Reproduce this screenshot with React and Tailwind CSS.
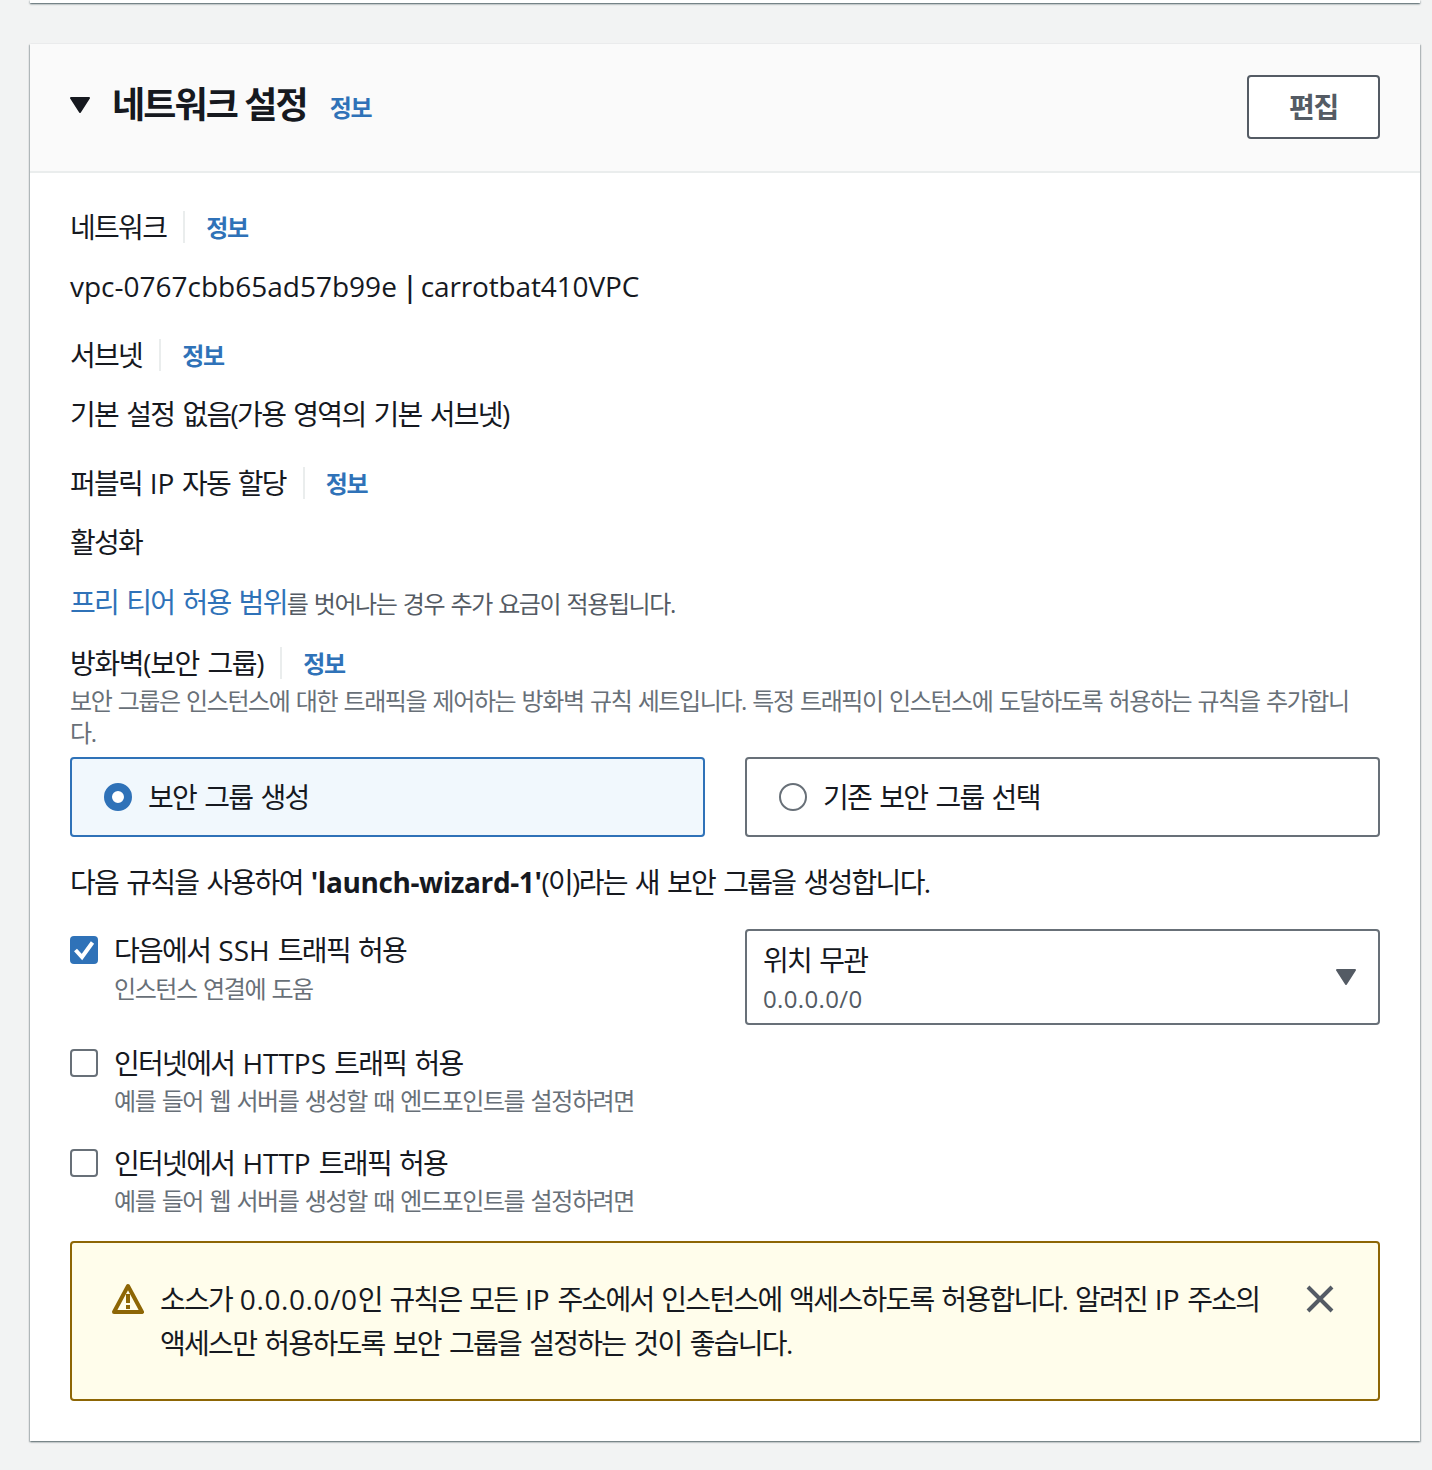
import React from "react";

const fontFamily = "font-['Open_Sans','Noto_Sans_CJK_KR',sans-serif]";

// hangul is tightened to the width of the original font, spaces opened up a bit
const body = "text-[28px] tracking-[-1.7px] [word-spacing:2.5px]";
const small = "text-[24px] leading-[32px] tracking-[-1.4px] [word-spacing:1.5px]";

function L({ children, className = "tracking-normal" }) {
    return <span className={`[word-spacing:0] ${className}`}>{children}</span>;
}

function InfoLink({ className = "" }) {
    return (
        <a className={`text-[24px] leading-[32px] font-bold tracking-[-1.3px] text-[#2f72b8] ${className}`}>
            정보
        </a>
    );
}

function FieldLabel({ children, className = "", textClassName = body }) {
    return (
        <div className={`flex items-center h-[40px] ${className}`}>
            <span className={`${textClassName} leading-[40px]`}>{children}</span>
            <span className="w-[2px] h-[32px] bg-[#eaeded] ml-[17px] mr-[21px]" />
            <InfoLink className="mt-[2px]" />
        </div>
    );
}

function FieldValue({ children, className = "" }) {
    return <div className={`${body} leading-[40px] ${className}`}>{children}</div>;
}

function Radio({ checked, label }) {
    return (
        <div
            className={`flex items-center h-[80px] pl-[32px] rounded-[4px] border-2 ${
                checked ? "bg-[#f1f8fd] border-[#2f72b8]" : "bg-white border-[#687078]"
            }`}
        >
            {checked ? (
                <span className="w-[28px] h-[28px] rounded-full border-[8px] border-[#2f72b8] bg-white" />
            ) : (
                <span className="w-[28px] h-[28px] rounded-full border-2 border-[#687078] bg-white" />
            )}
            <span className={`ml-[16px] ${body} leading-[40px]`}>{label}</span>
        </div>
    );
}

function Checkbox({ checked }) {
    if (checked) {
        return (
            <span className="block w-[28px] h-[28px] rounded-[4px] bg-[#2f72b8] shrink-0">
                <svg width="28" height="28" viewBox="0 0 28 28" fill="none">
                    <path d="M5.5 14 L12 21 L22.5 6.5" stroke="white" strokeWidth="4" />
                </svg>
            </span>
        );
    }
    return <span className="block w-[28px] h-[28px] rounded-[4px] border-2 border-[#687078] bg-white shrink-0" />;
}

function RuleRow({ checked, label, hint, className = "", hintClassName = "mt-[2px]" }) {
    return (
        <div className={`flex items-start gap-[16px] ${className}`}>
            <div className="pt-[6px]">
                <Checkbox checked={checked} />
            </div>
            <div>
                <div className={`${body} leading-[40px]`}>{label}</div>
                <div className={`${hintClassName} ${small} text-[#687078]`}>{hint}</div>
            </div>
        </div>
    );
}

export default function App() {
    return (
        <div className={`${fontFamily} bg-[#f2f3f3] h-[1470px] px-[30px] pr-[12px] text-[#16191f] overflow-hidden`}>
            <div className="h-[3px] bg-white shadow-[0_1px_2px_rgba(0,28,36,0.7)]" />

            <section className="mt-[41px] h-[1397px] bg-white shadow-[0_1px_2px_0_rgba(0,28,36,0.45),1px_1px_1px_0_rgba(0,28,36,0.15),-1px_1px_1px_0_rgba(0,28,36,0.15)]">
                <header className="flex items-center justify-between h-[129px] pl-[40px] pr-[40px] bg-[#fafafa] border-b-2 border-[#eaeded]">
                    <div className="flex items-center">
                        <svg width="20" height="16" viewBox="0 0 20 16" className="mt-[-6px]">
                            <path d="M1 1 H19 L10 15 Z" fill="#16191f" stroke="#16191f" strokeWidth="2" strokeLinejoin="round" />
                        </svg>
                        <h2 className="ml-[22px] text-[36px] leading-[48px] font-bold tracking-[-1.9px] mt-[-6px]">네트워크 설정</h2>
                        <InfoLink className="ml-[23px]" />
                    </div>
                    <button className="w-[133px] h-[64px] mt-[-2px] rounded-[4px] border-2 border-[#545b64] bg-white text-[28px] font-bold tracking-[-1.15px] text-[#545b64]">
                        편집
                    </button>
                </header>

                <div className="px-[40px] pt-[34px]">
                    <FieldLabel>네트워크</FieldLabel>
                    <FieldValue className="mt-[19px]">
                        <L>vpc-0767cbb65ad57b99e</L>
                        <span className="font-semibold tracking-[-2px] [word-spacing:0]"> | </span>
                        <L className="tracking-[-0.15px]">carrotbat410VPC</L>
                    </FieldValue>

                    <FieldLabel className="mt-[29px]">서브넷</FieldLabel>
                    <FieldValue className="mt-[19px]">기본 설정 없음(가용 영역의 기본 서브넷)</FieldValue>

                    <FieldLabel className="mt-[29px]" textClassName="text-[28px] tracking-[-1.7px] [word-spacing:2px]">
                        퍼블릭 <L>IP</L> 자동 할당
                    </FieldLabel>
                    <FieldValue className="mt-[19px]">활성화</FieldValue>

                    <div className={`mt-[20px] h-[40px] ${small} !leading-[40px] text-[#545b64]`}>
                        <a className={`${body} text-[#2f72b8]`}>프리 티어 허용 범위</a>를 벗어나는 경우 추가 요금이 적용됩니다.
                    </div>

                    <FieldLabel className="mt-[21px]" textClassName="text-[28px] tracking-[-1.35px] [word-spacing:2.5px]">
                        방화벽(보안 그룹)
                    </FieldLabel>
                    <p className={`mt-[2px] w-[1290px] ${small} text-[#687078]`}>
                        보안 그룹은 인스턴스에 대한 트래픽을 제어하는 방화벽 규칙 세트입니다. 특정 트래픽이 인스턴스에 도달하도록 허용하는 규칙을 추가합니다.
                    </p>

                    <div className="grid grid-cols-2 gap-[40px] mt-[8px]">
                        <Radio checked label="보안 그룹 생성" />
                        <Radio label="기존 보안 그룹 선택" />
                    </div>

                    <p className={`mt-[25px] ${body} leading-[40px]`}>
                        다음 규칙을 사용하여 <b className="tracking-[-0.4px]">'launch-wizard-1'</b>(이)라는 새 보안 그룹을 생성합니다.
                    </p>

                    <div className="grid grid-cols-2 gap-[40px] mt-[27px]">
                        <RuleRow
                            checked
                            label={<>다음에서 <L>SSH</L> 트래픽 허용</>}
                            hint="인스턴스 연결에 도움"
                            className="pt-[1px]"
                            hintClassName="mt-[3px]"
                        />
                        <div className="relative h-[96px] rounded-[4px] border-2 border-[#687078] pl-[16px] pt-[9px]">
                            <div className={`${body} leading-[40px]`}>위치 무관</div>
                            <div className="text-[24px] leading-[32px] tracking-[0.35px] text-[#545b64] mt-[3px]">0.0.0.0/0</div>
                            <svg width="20" height="16" viewBox="0 0 20 16" className="absolute right-[22px] top-[38px]">
                                <path d="M1 1 H19 L10 15 Z" fill="#545b64" stroke="#545b64" strokeWidth="2" strokeLinejoin="round" />
                            </svg>
                        </div>
                    </div>

                    <RuleRow
                        label={<>인터넷에서 <L>HTTPS</L> 트래픽 허용</>}
                        hint="예를 들어 웹 서버를 생성할 때 엔드포인트를 설정하려면"
                        className="mt-[18px]"
                    />
                    <RuleRow
                        label={<>인터넷에서 <L>HTTP</L> 트래픽 허용</>}
                        hint="예를 들어 웹 서버를 생성할 때 엔드포인트를 설정하려면"
                        className="mt-[26px]"
                    />

                    <div className="flex items-start h-[160px] mt-[24px] pl-[40px] pr-[44px] pt-[34px] rounded-[4px] border-2 border-[#8d6605] bg-[#fffdeb]">
                        <svg width="32" height="32" viewBox="0 0 32 32" fill="none" className="mt-[6px] shrink-0">
                            <path d="M16 3 L30 29 H2 Z" stroke="#8d6605" strokeWidth="4" strokeLinejoin="round" />
                            <path d="M16 11 V20 M16 22 V26" stroke="#8d6605" strokeWidth="4" />
                        </svg>
                        <div className={`ml-[16px] w-[1110px] ${body} leading-[44px]`}>
                            <div className="[word-spacing:2.1px]">
                                소스가 <L className="tracking-[0.6px]">0.0.0.0/0</L>인 규칙은 모든 <L>IP</L> 주소에서 인스턴스에 액세스하도록 허용합니다. 알려진 <L>IP</L> 주소의
                            </div>
                            <div>액세스만 허용하도록 보안 그룹을 설정하는 것이 좋습니다.</div>
                        </div>
                        <svg width="28" height="28" viewBox="0 0 28 28" fill="none" className="ml-auto mt-[8px] shrink-0">
                            <path d="M2 2 L26 26 M26 2 L2 26" stroke="#545b64" strokeWidth="4" />
                        </svg>
                    </div>
                </div>
            </section>
        </div>
    );
}
